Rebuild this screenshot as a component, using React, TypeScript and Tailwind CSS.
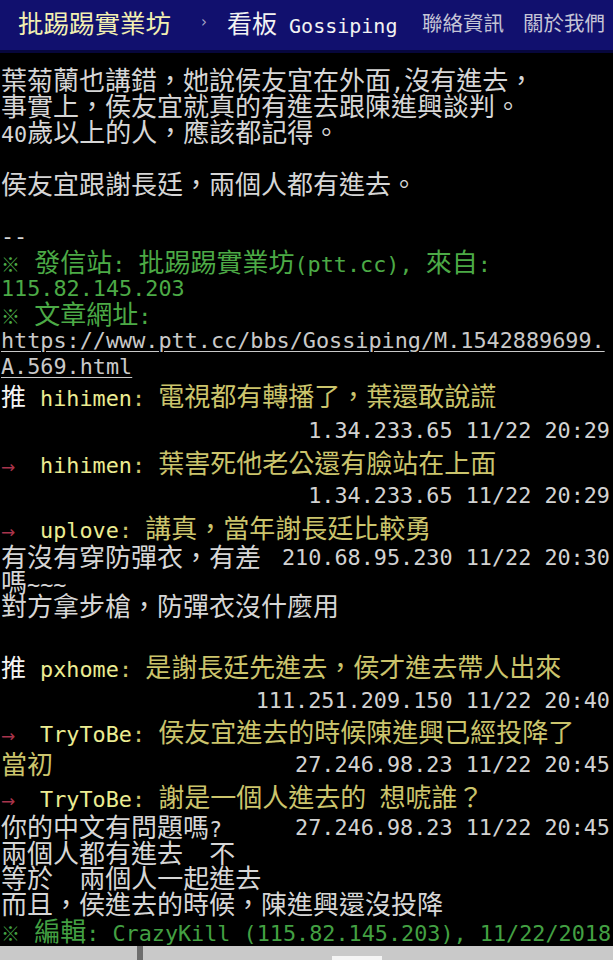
import React from 'react';

// fullwidth ranges get the CJK face, the rest the mono face at half width
const WIDE = /[\u2190-\u21ff\u2e80-\u9fff\uf900-\ufaff\uff00-\uffef]/;

function runs(s: string) {
  const out: { t: string; wide: boolean }[] = [];
  for (const ch of s) {
    const wide = WIDE.test(ch);
    const last = out[out.length - 1];
    if (last && last.wide === wide) last.t += ch;
    else out.push({ t: ch, wide });
  }
  return out;
}

function Txt({ s, className = '' }: { s: string; className?: string }) {
  return (
    <span className={className}>
      {runs(s).map((r, i) =>
        r.wide ? (
          <span key={i} className="font-['Noto_Sans_CJK_TC',sans-serif] text-[26px]">
            {r.t}
          </span>
        ) : (
          <span key={i} className="font-['DejaVu_Sans_Mono',monospace] text-[21.8px]">
            {r.t}
          </span>
        ),
      )}
    </span>
  );
}

function Mark() {
  return (
    <span className="inline-block w-[20px] font-['Noto_Sans_CJK_TC',sans-serif] text-[19px]">※</span>
  );
}

function Row({ h, children, ip }: { h: string; children?: React.ReactNode; ip?: string }) {
  return (
    <div className={`flex items-center justify-between whitespace-pre leading-[26px] pl-[1px] pr-[3px] ${h}`}>
      <div className="whitespace-pre">{children}</div>
      {ip && <Txt s={ip} className="text-[#d2d2d2]" />}
    </div>
  );
}

function Push({ tag, user, text }: { tag: 'push' | 'arrow'; user: string; text: string }) {
  return (
    <>
      {tag === 'push' ? (
        <span className="inline-block w-[26px] font-['Noto_Sans_CJK_TC',sans-serif] text-[25px] text-[#f4f4f4]">推</span>
      ) : (
        <span className="inline-block w-[26px] font-['DejaVu_Sans',sans-serif] text-[17px] text-[#a8344c]">→</span>
      )}
      <Txt s={' ' + user} className="text-[#ecec92]" />
      <Txt s={': ' + text} className="text-[#cbc46c]" />
    </>
  );
}

export default function App() {
  const gray = 'text-[#d6d6d6]';
  const green = 'text-[#4caa46]';

  return (
    <div className="w-[613px] h-[960px] bg-black overflow-hidden flex flex-col">
      {/* Header */}
      <header className="bg-[#11106e] h-[50px] flex items-center pb-[5px] pl-[18px] pr-[8px] whitespace-pre">
        <span className="font-['Noto_Sans_CJK_TC',sans-serif] text-[25.5px] text-[#f3f0b2]">批踢踢實業坊</span>
        <span className="ml-[30px] font-['DejaVu_Sans',sans-serif] text-[15px] text-[#a9a9c6]">›</span>
        <span className="ml-[20px] text-[#f2f2f2]">
          <span className="font-['Noto_Sans_CJK_TC',sans-serif] text-[25px]">看板</span>
          <span className="font-['DejaVu_Sans_Mono',monospace] text-[20px]"> Gossiping</span>
        </span>
        <div className="ml-auto flex gap-[19px] font-['Noto_Sans_CJK_TC',sans-serif] text-[20.5px] text-[#c4c4d6]">
          <span>聯絡資訊</span>
          <span>關於我們</span>
        </div>
      </header>
      <div className="h-[3px] bg-[#07073c]" />

      {/* Article */}
      <main className="pt-[15px] flex flex-col">
        <Row h="h-[26px]"><Txt s="葉菊蘭也講錯，她說侯友宜在外面,沒有進去，" className={gray} /></Row>
        <Row h="h-[26px]"><Txt s="事實上，侯友宜就真的有進去跟陳進興談判。" className={gray} /></Row>
        <Row h="h-[26px]"><Txt s="40歲以上的人，應該都記得。" className={gray} /></Row>
        <Row h="h-[26px]" />
        <Row h="h-[26px]"><Txt s="侯友宜跟謝長廷，兩個人都有進去。" className={gray} /></Row>
        <Row h="h-[26px]" />
        <Row h="h-[26px]"><Txt s="--" className={gray} /></Row>
        <Row h="h-[26px]">
          <span className={green}><Mark /><Txt s=" 發信站: 批踢踢實業坊(ptt.cc), 來自:" /></span>
        </Row>
        <Row h="h-[26px]"><Txt s="115.82.145.203" className={green} /></Row>
        <Row h="h-[26px]">
          <span className={green}><Mark /><Txt s=" 文章網址:" /></span>
        </Row>
        <Row h="h-[26px]">
          <Txt s="https://www.ptt.cc/bbs/Gossiping/M.1542889699." className="text-[#c9c9c9] underline underline-offset-[3px]" />
        </Row>
        <Row h="h-[26px]">
          <Txt s="A.569.html" className="text-[#c9c9c9] underline underline-offset-[3px]" />
        </Row>

        {/* Pushes */}
        <Row h="h-[34px]"><Push tag="push" user="hihimen" text="電視都有轉播了，葉還敢說謊" /></Row>
        <Row h="h-[34px]" ip="1.34.233.65 11/22 20:29" />
        <Row h="h-[32px]"><Push tag="arrow" user="hihimen" text="葉害死他老公還有臉站在上面" /></Row>
        <Row h="h-[33px]" ip="1.34.233.65 11/22 20:29" />
        <Row h="h-[32px]"><Push tag="arrow" user="uplove" text="講真，當年謝長廷比較勇" /></Row>
        <Row h="h-[26px]" ip="210.68.95.230 11/22 20:30"><Txt s="有沒有穿防彈衣，有差" className={gray} /></Row>
        <Row h="h-[24px]"><Txt s="嗎~~~" className={gray} /></Row>
        <Row h="h-[24px]"><Txt s="對方拿步槍，防彈衣沒什麼用" className={gray} /></Row>
        <Row h="h-[32px]" />
        <Row h="h-[34px]"><Push tag="push" user="pxhome" text="是謝長廷先進去，侯才進去帶人出來" /></Row>
        <Row h="h-[32px]" ip="111.251.209.150 11/22 20:40" />
        <Row h="h-[32px]"><Push tag="arrow" user="TryToBe" text="侯友宜進去的時候陳進興已經投降了" /></Row>
        <Row h="h-[33px]" ip="27.246.98.23 11/22 20:45"><Txt s="當初" className="text-[#cbc46c]" /></Row>
        <Row h="h-[33px]"><Push tag="arrow" user="TryToBe" text="謝是一個人進去的 想唬誰？" /></Row>
        <Row h="h-[27px]" ip="27.246.98.23 11/22 20:45"><Txt s="你的中文有問題嗎?" className={gray} /></Row>
        <Row h="h-[25px]"><Txt s="兩個人都有進去  不" className={gray} /></Row>
        <Row h="h-[25px]"><Txt s="等於  兩個人一起進去" className={gray} /></Row>
        <Row h="h-[26px]"><Txt s="而且，侯進去的時候，陳進興還沒投降" className={gray} /></Row>
        <Row h="h-[28px]">
          <span className="text-[#43a043]"><Mark /><Txt s=" 編輯: CrazyKill (115.82.145.203), 11/22/2018" /></span>
        </Row>
      </main>

      {/* bottom strip */}
      <div className="mt-auto h-[14px] bg-[#c9c9c9] flex pl-[137px]">
        <div className="w-[6px] h-full bg-[#6e6e6e]" />
        <div className="ml-[189px] w-[50px] h-[4px] self-end bg-[#f4f4f4]" />
      </div>
    </div>
  );
}
